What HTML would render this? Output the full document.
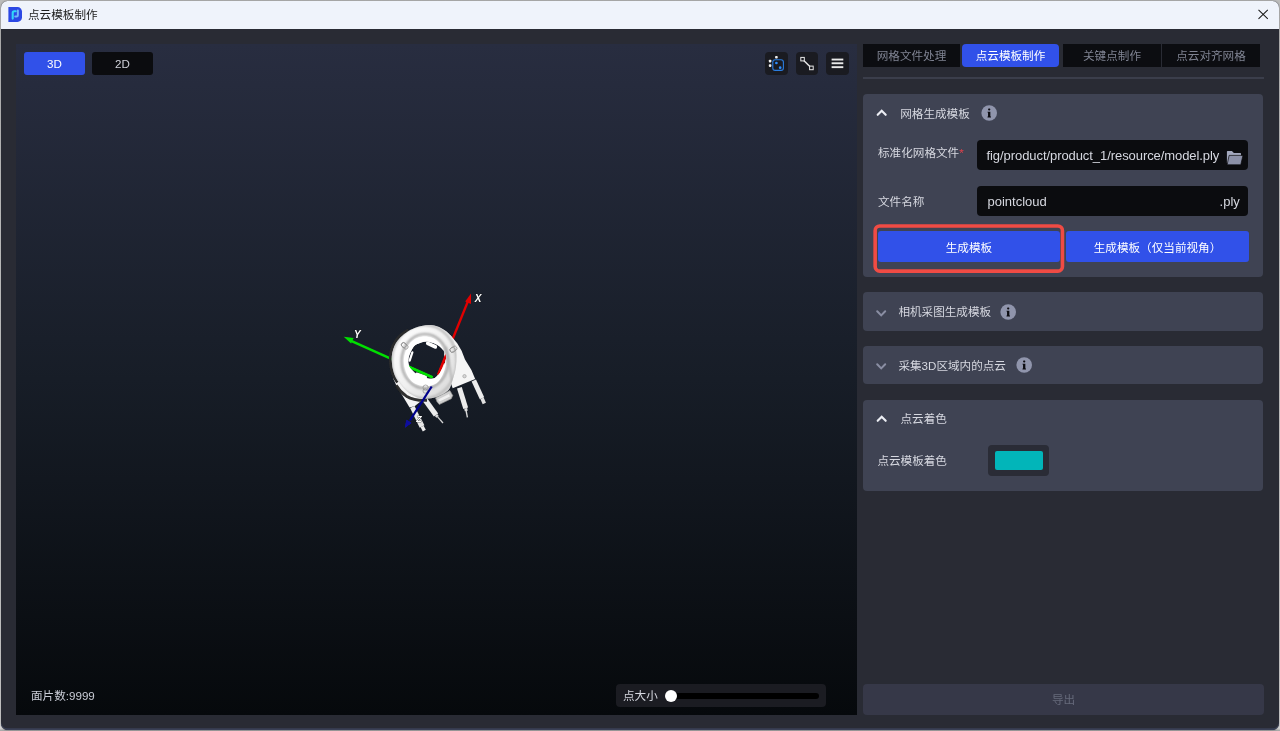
<!DOCTYPE html>
<html lang="zh-CN">
<head>
<meta charset="utf-8">
<title>点云模板制作</title>
<style>
*{box-sizing:border-box;margin:0;padding:0}
html,body{width:1280px;height:731px;overflow:hidden}
body{background:linear-gradient(180deg,#bcbcbc 0,#cfcfcf 30%,#d8d8d8 99.6%,#a0a0a0 100%);font-family:"Liberation Sans","Noto Sans CJK SC",sans-serif;font-size:11.6px;color:#d6d8e0;position:relative}
.abs{position:absolute}
#win{position:absolute;left:1px;top:1px;width:1277.8px;height:728.8px;border-radius:6.5px 6.5px 6.5px 6.5px;background:#292b34;overflow:hidden;box-shadow:0 0 2px rgba(0,0,0,.45),inset 0 -1.7px 0 #3a4056;will-change:transform}
#titlebar{position:absolute;left:0;top:0;width:100%;height:28.2px;background:#eff3fb}
#title{position:absolute;left:27px;top:0;height:28px;line-height:28px;font-size:11.6px;color:#1b1b1b}
#viewport{position:absolute;left:15px;top:43.4px;width:840.5px;height:670.4px;background:linear-gradient(180deg,#282d40 0%,#171d27 50%,#06090c 100%)}
.vbtn{position:absolute;top:51px;height:23px;width:61px;border-radius:3px;text-align:center;line-height:23px;font-size:11.6px;color:#e6e8f0}
.ibtn{position:absolute;top:51px;width:23px;height:23px;border-radius:4px;background:#1a1b21}
.tab{position:absolute;top:43px;height:23px;width:97px;background:#0c0d11;color:#7f8392;text-align:center;line-height:24px;font-size:11.6px}
.tab.on{background:#3151e9;color:#fff;border-radius:4px}
.panel{position:absolute;left:862px;width:400px;background:#3f4353;border-radius:4px}
.ptitle{position:absolute;font-size:11.6px;color:#d6d8e0;line-height:16px;white-space:nowrap}
.lbl{position:absolute;font-size:11.6px;color:#d6d8e0;line-height:16px;white-space:nowrap}
.inp{position:absolute;background:#0b0c0f;border-radius:4px;height:30px;color:#d6d8e0;font-size:13px;line-height:32px;white-space:nowrap;overflow:hidden}
.bbtn{position:absolute;background:#3151e9;border-radius:3px;height:30px;color:#fff;text-align:center;line-height:33px;font-size:11.6px;overflow:hidden}
</style>
</head>
<body>
<div id="win">
  <div id="titlebar">
    <svg class="abs" style="left:7px;top:6px" width="15" height="16" viewBox="0 0 15 16">
      <path d="M0.4 0.1H9.5A4.5 4.5 0 0 1 14 4.6V10.4A4.5 4.5 0 0 1 9.5 14.9H0.4Z" fill="#2c48e4"/>
      <path d="M4.7 11.6V5.7Q4.7 4.2 6.2 4.2H7.7" fill="none" stroke="#30d8f8" stroke-width="2.1" stroke-linecap="round"/>
      <path d="M9.85 3.4V8.2Q9.85 9.45 8.6 9.45H7.2" fill="none" stroke="#72b8f8" stroke-width="2" stroke-linecap="round"/>
    </svg>
    <div id="title">点云模板制作</div>
    <svg class="abs" style="left:1256px;top:8px" width="13" height="13" viewBox="0 0 13 13"><path d="M1.5 0.8L10.8 9.9M10.8 0.8L1.5 9.9" stroke="#1a1a1a" stroke-width="1.05" fill="none"/></svg>
  </div>

  <div id="viewport"></div>
  <div class="vbtn" style="left:23px;background:#3151e9;color:#fff">3D</div>
  <div class="vbtn" style="left:91px;background:#0b0c0f;color:#d0d2da">2D</div>

  <div class="ibtn" style="left:764px"></div>
  <div class="ibtn" style="left:794.7px;width:22.6px"></div>
  <div class="ibtn" style="left:825px"></div>
  <svg class="abs" style="left:-1px;top:-1px" width="1280" height="731" viewBox="0 0 1280 731">
    <!-- icon 1 -->
    <rect x="775.1" y="55.9" width="2.6" height="2.6" rx="0.8" fill="#f0f0f0"/>
    <rect x="768.8" y="59.8" width="2.6" height="2.6" rx="0.8" fill="#f0f0f0"/>
    <rect x="768.8" y="64.3" width="2.6" height="2.6" rx="0.8" fill="#f0f0f0"/>
    <rect x="772.8" y="59.7" width="10.6" height="10.7" rx="2.4" fill="none" stroke="#2a7de0" stroke-width="1.1"/>
    <circle cx="776.4" cy="63" r="1.35" fill="#2a8cff"/>
    <circle cx="780.2" cy="67.7" r="1.35" fill="#2a8cff"/>
    <!-- icon 2 -->
    <path d="M802.5 59.2L811.4 67.9" stroke="#e8e8e8" stroke-width="1.4" fill="none"/>
    <rect x="800.8" y="57.4" width="3.5" height="3.5" fill="#1a1b21" stroke="#e8e8e8" stroke-width="1"/>
    <rect x="809.6" y="66.1" width="3.6" height="3.6" fill="#1a1b21" stroke="#e8e8e8" stroke-width="1"/>
    <!-- icon 3 -->
    <rect x="831.6" y="58.6" width="11.7" height="1.9" fill="#e8e8e8"/>
    <rect x="831.6" y="62.3" width="11.7" height="1.9" fill="#e8e8e8"/>
    <rect x="831.6" y="66.2" width="11.7" height="1.9" fill="#e8e8e8"/>
  </svg>
  <svg id="model" class="abs" style="left:-1px;top:-1px" width="1280" height="731" viewBox="0 0 1280 731">
    <defs>
      <linearGradient id="gRing" x1="0" y1="0" x2="1" y2="1">
        <stop offset="0" stop-color="#ffffff"/><stop offset="0.5" stop-color="#f1f1f1"/><stop offset="1" stop-color="#d6d6d6"/>
      </linearGradient>
      <filter id="b1" x="-30%" y="-30%" width="160%" height="160%"><feGaussianBlur stdDeviation="0.8"/></filter>
      <filter id="b3" x="-30%" y="-30%" width="160%" height="160%"><feGaussianBlur stdDeviation="0.55"/></filter>
      <filter id="b2" x="-20%" y="-20%" width="140%" height="140%"><feGaussianBlur stdDeviation="0.35"/></filter>
      <clipPath id="cpRing"><path d="M428.8 325.1C431.0 325.2 433.8 325.4 436.0 326.0C438.2 326.6 440.1 327.5 441.9 328.4C443.7 329.3 445.1 330.3 446.6 331.5C448.1 332.7 449.6 334.1 450.7 335.5C451.8 336.9 452.8 338.4 453.5 340.0C454.2 341.6 454.5 343.1 455.0 345.0C455.5 346.9 456.1 349.3 456.3 351.5C456.6 353.7 456.5 355.8 456.5 358.0C456.5 360.2 456.4 362.7 456.1 365.0C455.9 367.3 455.7 369.2 455.0 372.0C454.3 374.8 452.9 379.1 452.0 382.0C451.1 384.9 450.4 387.3 449.3 389.1C448.2 390.9 446.9 391.6 445.4 392.6C443.9 393.6 442.2 394.5 440.4 395.3C438.6 396.1 436.6 396.9 434.5 397.4C432.4 397.9 430.2 398.3 428.0 398.4C425.8 398.5 423.2 398.5 421.0 398.2C418.8 397.9 417.4 397.6 415.0 396.5C412.6 395.4 409.5 393.6 406.9 391.3C404.3 389.0 401.1 385.0 399.2 382.6C397.3 380.2 396.4 378.8 395.4 376.8C394.4 374.8 393.8 372.7 393.2 370.5C392.6 368.3 392.2 365.9 392.0 363.5C391.8 361.1 391.6 358.6 391.8 356.3C392.0 354.0 392.5 351.7 393.2 349.5C393.9 347.3 394.7 345.2 395.9 343.2C397.1 341.1 398.8 339.0 400.6 337.2C402.4 335.4 405.0 333.5 406.9 332.2C408.8 330.9 410.2 330.1 412.0 329.3C413.8 328.5 415.7 327.7 417.5 327.1C419.3 326.5 421.1 326.0 423.0 325.7C424.9 325.4 426.6 325.1 428.8 325.1Z"/></clipPath>
      <clipPath id="cpHole"><path d="M416.7 344.3C419.3 342.9 423.9 341.1 427.7 341.5C431.5 341.9 436.7 344.2 439.7 346.5C442.7 348.8 444.9 352.3 445.7 355.2C446.5 358.1 446.0 360.6 444.6 364.0C443.2 367.4 439.8 373.1 437.5 375.5C435.2 377.9 434.3 378.8 431.0 378.7C427.7 378.6 421.4 376.9 417.8 374.9C414.2 372.9 411.2 369.4 409.6 366.7C408.1 364.0 408.1 361.3 408.5 358.5C408.9 355.7 410.4 352.1 411.8 349.7C413.2 347.3 414.1 345.7 416.7 344.3Z"/></clipPath>
    </defs>
    <g filter="url(#b2)">
    <!-- Y axis -->
    <path d="M432.6 377.4L350 340.3" stroke="#00e000" stroke-width="2.4" fill="none"/>
    <path d="M343.7 336.7L353.6 337.9L351.1 343.6Z" fill="#00e000"/>
    <!-- X axis -->
    <path d="M438.2 374.7L468.3 300.4" stroke="#e00000" stroke-width="2.4" fill="none"/>
    <path d="M471 293.6L471 304L465.2 301.6Z" fill="#e00000"/>
    <!-- pins -->
    <path d="M412.3 407L418.7 419.8" stroke="#ececec" stroke-width="4.9" fill="none"/>
    <path d="M418.7 419.8L422.1 426.5" stroke="#e6e6e6" stroke-width="5.2" fill="none"/>
    <path d="M422.1 426.5L424.3 430.6" stroke="#ededed" stroke-width="3.4" fill="none"/>
    <path d="M425 399.7L436 415" stroke="#ececec" stroke-width="5.3" fill="none"/>
    <path d="M436 415L437.6 416.9" stroke="#dcdcdc" stroke-width="3" fill="none"/>
    <path d="M437.6 416.9L443 423" stroke="#d4d4d4" stroke-width="1.3" fill="none"/>
    <path d="M459.4 387.7L465.7 408.3" stroke="#ececec" stroke-width="5" fill="none"/>
    <path d="M465.7 408.3L466.2 411" stroke="#e0e0e0" stroke-width="3" fill="none"/>
    <path d="M466 410.2L467.4 417.4" stroke="#dcdcdc" stroke-width="1.4" fill="none"/>
    <path d="M473.8 380.5L482 398.3" stroke="#ececec" stroke-width="4.8" fill="none"/>
    <path d="M482 398.3L484.3 403.5" stroke="#e0e0e0" stroke-width="3.6" fill="none"/>
    <!-- housing left-bottom -->
    <path d="M393 378L396.4 385.6L409.6 407.6L414.9 405.9L423.6 399L424 394L410 386Z" fill="#f4f4f4"/>
    <!-- clip -->
    <path d="M435.5 397.8L449.9 390.6L452.7 395.4L451.3 398.7L439.3 404.5L436.9 401.6Z" fill="#cfcfcf" stroke="#8f8f8f" stroke-width="0.7"/>
    <path d="M438 399.4L449 394L450 396.4L439.6 401.6Z" fill="#f0f0f0"/>
    <!-- bracket -->
    <path d="M447 336L450.7 335.5L457.2 343.2L461.6 350.8L465 359.6L471.4 370L475.2 379.1L452.7 388.2L448 375L444 355Z" fill="#f5f5f5"/>
    <circle cx="464.5" cy="376.2" r="1.7" fill="#d6d6d6" stroke="#9a9a9a" stroke-width="0.6"/>
    </g>
    <!-- ring shadow -->
    <path d="M408.5 329.8C407.1 330.8 402.7 333.5 400.4 335.6C398.1 337.7 396.3 340.1 394.9 342.4C393.4 344.7 392.4 347.2 391.7 349.5C390.9 351.8 390.6 353.9 390.4 356.3C390.2 358.7 390.4 361.6 390.7 364.0C390.9 366.4 391.3 368.8 391.9 371.0C392.5 373.2 393.4 375.6 394.3 377.5C395.2 379.4 396.9 381.6 397.4 382.4" fill="none" stroke="#2c2c2c" stroke-width="2.8" filter="url(#b3)"/>
    <path d="M396.2 385.2C399 390 402.5 393.6 406.4 396.2C411 399 418 400.8 427 400.4" fill="none" stroke="#262626" stroke-width="2.8" filter="url(#b3)" opacity="0.95"/>
    <!-- ring -->
    <g filter="url(#b2)">
    <path fill-rule="evenodd" d="M428.8 325.1C431.0 325.2 433.8 325.4 436.0 326.0C438.2 326.6 440.1 327.5 441.9 328.4C443.7 329.3 445.1 330.3 446.6 331.5C448.1 332.7 449.6 334.1 450.7 335.5C451.8 336.9 452.8 338.4 453.5 340.0C454.2 341.6 454.5 343.1 455.0 345.0C455.5 346.9 456.1 349.3 456.3 351.5C456.6 353.7 456.5 355.8 456.5 358.0C456.5 360.2 456.4 362.7 456.1 365.0C455.9 367.3 455.7 369.2 455.0 372.0C454.3 374.8 452.9 379.1 452.0 382.0C451.1 384.9 450.4 387.3 449.3 389.1C448.2 390.9 446.9 391.6 445.4 392.6C443.9 393.6 442.2 394.5 440.4 395.3C438.6 396.1 436.6 396.9 434.5 397.4C432.4 397.9 430.2 398.3 428.0 398.4C425.8 398.5 423.2 398.5 421.0 398.2C418.8 397.9 417.4 397.6 415.0 396.5C412.6 395.4 409.5 393.6 406.9 391.3C404.3 389.0 401.1 385.0 399.2 382.6C397.3 380.2 396.4 378.8 395.4 376.8C394.4 374.8 393.8 372.7 393.2 370.5C392.6 368.3 392.2 365.9 392.0 363.5C391.8 361.1 391.6 358.6 391.8 356.3C392.0 354.0 392.5 351.7 393.2 349.5C393.9 347.3 394.7 345.2 395.9 343.2C397.1 341.1 398.8 339.0 400.6 337.2C402.4 335.4 405.0 333.5 406.9 332.2C408.8 330.9 410.2 330.1 412.0 329.3C413.8 328.5 415.7 327.7 417.5 327.1C419.3 326.5 421.1 326.0 423.0 325.7C424.9 325.4 426.6 325.1 428.8 325.1ZM416.7 344.3C419.3 342.9 423.9 341.1 427.7 341.5C431.5 341.9 436.7 344.2 439.7 346.5C442.7 348.8 444.9 352.3 445.7 355.2C446.5 358.1 446.0 360.6 444.6 364.0C443.2 367.4 439.8 373.1 437.5 375.5C435.2 377.9 434.3 378.8 431.0 378.7C427.7 378.6 421.4 376.9 417.8 374.9C414.2 372.9 411.2 369.4 409.6 366.7C408.1 364.0 408.1 361.3 408.5 358.5C408.9 355.7 410.4 352.1 411.8 349.7C413.2 347.3 414.1 345.7 416.7 344.3Z" fill="url(#gRing)"/>
    </g>
    <g clip-path="url(#cpRing)">
      <ellipse cx="424.2" cy="361.6" rx="32.6" ry="36.8" fill="none" stroke="#bcbcbc" stroke-width="2.4" filter="url(#b1)"/>
      <ellipse cx="424.9" cy="361.2" rx="23.3" ry="27.2" fill="none" stroke="#a6a6a6" stroke-width="2.2" filter="url(#b1)"/>
      <path d="M445.6 347L449.6 367.2L453.4 388" fill="none" stroke="#b0b0b0" stroke-width="1.8" filter="url(#b1)"/>
      <path fill-rule="evenodd" d="M424.9 336.4C429.6 336.4 435.5 338.4 439.0 342.5C442.5 346.6 446.1 354.8 446.1 361.2C446.1 367.6 442.5 376.8 439.0 381.0C435.5 385.2 429.6 386.4 424.9 386.2C420.1 386.0 414.0 384.2 410.5 380.0C407.0 375.8 403.8 367.4 403.8 361.2C403.8 354.9 407.0 346.6 410.5 342.5C414.0 338.4 420.1 336.4 424.9 336.4ZM416.7 344.3C419.3 342.9 423.9 341.1 427.7 341.5C431.5 341.9 436.7 344.2 439.7 346.5C442.7 348.8 444.9 352.3 445.7 355.2C446.5 358.1 446.0 360.6 444.6 364.0C443.2 367.4 439.8 373.1 437.5 375.5C435.2 377.9 434.3 378.8 431.0 378.7C427.7 378.6 421.4 376.9 417.8 374.9C414.2 372.9 411.2 369.4 409.6 366.7C408.1 364.0 408.1 361.3 408.5 358.5C408.9 355.7 410.4 352.1 411.8 349.7C413.2 347.3 414.1 345.7 416.7 344.3Z" fill="#ffffff" filter="url(#b2)"/>
    </g>
    <!-- notches -->
    <g fill="#ffffff" filter="url(#b2)">
      <rect x="-6" y="-1.9" width="12" height="3.8" rx="1.9" transform="translate(431.5 345.1) rotate(25)"/>
      <rect x="-6.2" y="-2" width="12.4" height="4" rx="2" transform="translate(421.1 376) rotate(20)"/>
      <rect x="-5.5" y="-1.1" width="11" height="2.2" rx="1.1" transform="translate(411 356.5) rotate(-72)"/>
      <rect x="-5" y="-1.3" width="10" height="2.6" rx="1.3" transform="translate(442 367.5) rotate(-68)"/>
    </g>
    <g clip-path="url(#cpHole)" filter="url(#b2)">
      <path d="M432.6 377.4L350 340.3" stroke="#00e000" stroke-width="2.4" fill="none"/>
      <path d="M438.2 374.7L468.3 300.4" stroke="#e00000" stroke-width="2.4" fill="none"/>
    </g>
    <!-- small ovals -->
    <g fill="none" stroke="#8c8c8c" stroke-width="0.7">
      <rect x="-3.8" y="-2.2" width="7.6" height="4.4" rx="2.2" transform="translate(404.7 345.9) rotate(42)"/>
      <rect x="-2.6" y="-2.2" width="5.2" height="4.4" rx="2.2" transform="translate(403.8 345.1) rotate(42)"/>
      <rect x="-3.8" y="-2.3" width="7.6" height="4.6" rx="2.3" transform="translate(453.4 349.2) rotate(-32)"/>
      <rect x="-2.6" y="-2.3" width="5.2" height="4.6" rx="2.3" transform="translate(452.6 349.8) rotate(-32)"/>
      <circle cx="425.6" cy="387.6" r="2.6"/>
      <circle cx="425.2" cy="391" r="2.2"/>
    </g>
    <!-- Z axis -->
    <g filter="url(#b2)">
    <path d="M431.7 386.5L410 420.4" stroke="#06068c" stroke-width="2.2" fill="none"/>
    <path d="M405.3 427.2L406.7 420.2L411.1 423Z" fill="#1010a0" stroke="#1010a0" stroke-width="1" stroke-linejoin="round"/>
    </g>
    <g font-family="'Liberation Sans',sans-serif" font-size="10" font-weight="bold" font-style="italic" fill="#ffffff" stroke="#111" stroke-width="0.5" paint-order="stroke">
      <text x="474.8" y="302.2">X</text>
      <text x="353.9" y="338">Y</text>
      <text x="416.2" y="422" font-size="9">Z</text>
    </g>
  </svg>

  <div class="lbl" style="left:30px;top:687px;color:#c9ccd6">面片数:9999</div>

  <div class="abs" style="left:615px;top:683px;width:210px;height:23px;background:#1b1c22;border-radius:4px"></div>
  <div class="lbl" style="left:622px;top:686.5px;color:#d6d8e0">点大小</div>
  <div class="abs" style="left:667px;top:691.5px;width:151px;height:6px;border-radius:3px;background:#000"></div>
  <div class="abs" style="left:664px;top:688.5px;width:12px;height:12px;border-radius:6px;background:#fff"></div>

  <!-- tabs -->
  <div class="tab" style="left:862px">网格文件处理</div>
  <div class="tab on" style="left:961px">点云模板制作</div>
  <div class="tab" style="left:1062px;width:98px">关键点制作</div>
  <div class="tab" style="left:1161.2px;width:97.6px">点云对齐网格</div>
  <div class="abs" style="left:862px;top:75.5px;width:400.5px;height:2px;background:#3b3e4b"></div>

  <!-- panel 1 -->
  <div class="panel" style="top:93px;height:183px"></div>
  <svg class="abs" style="left:874px;top:106.3px" width="14" height="10" viewBox="0 0 14 10"><path d="M2.7 7.8L6.7 3.7L10.7 7.8" fill="none" stroke="#eceef4" stroke-width="2.1" stroke-linecap="round" stroke-linejoin="miter"/></svg>
  <div class="ptitle" style="left:899.2px;top:104.5px">网格生成模板</div>
  <svg class="abs info" style="left:979.5px;top:104px" width="17" height="17" viewBox="0 0 17 17"><circle cx="8.2" cy="8" r="7.8" fill="#9095ac"/><rect x="7.05" y="3.6" width="2.3" height="1.8" rx="0.8" fill="#0c0c10"/><path d="M6.5 6.7H9.35V11.6H10V12.6H6.5V11.6H7.05V7.6H6.5Z" fill="#0c0c10"/></svg>

  <div class="lbl" style="left:877px;top:144.1px">标准化网格文件<span style="color:#e0404a">*</span></div>
  <div class="inp" style="left:976px;top:139px;width:271px;padding-left:9.5px;letter-spacing:-0.07px">fig/product/product_1/resource/model.ply</div>
  <svg class="abs" style="left:1225px;top:149px" width="18" height="16" viewBox="0 0 18 16"><path d="M0.9 1.6Q0.9 0.9 1.6 0.9H5.9L7.9 2.9H14.3Q15 2.9 15 3.6V13H0.9Z" fill="#a3a8bd"/><path d="M3.1 5.4H16.2Q17 5.4 16.8 6.1L14.9 14.2Q14.8 14.8 14.1 14.8H1.1Z" fill="#8c91a8" stroke="#0b0c0f" stroke-width="0.7"/><path d="M1.1 14.8L3.1 5.8" stroke="#0b0c0f" stroke-width="0" fill="none"/></svg>

  <div class="lbl" style="left:877px;top:192.5px">文件名称</div>
  <div class="inp" style="left:976px;top:185px;width:271px;padding-left:10.5px">pointcloud<span style="position:absolute;right:8.2px;top:0">.ply</span></div>

  <svg class="abs" style="left:870px;top:221px" width="197" height="54" viewBox="0 0 197 54"><rect x="4.15" y="4.05" width="187.3" height="45.1" rx="4.6" fill="none" stroke="#f04b44" stroke-width="3.6"/></svg>
  <div class="bbtn" style="left:877px;top:230.1px;height:30.9px;width:181.8px">生成模板</div>
  <div class="bbtn" style="left:1065px;top:230.1px;height:30.9px;width:183px">生成模板（仅当前视角）</div>

  <!-- panel 2 -->
  <div class="panel" style="top:291px;height:39px"></div>
  <svg class="abs" style="left:874px;top:306px" width="14" height="12" viewBox="0 0 14 12"><path d="M2.2 4.3L6.2 8.4L10.2 4.3" fill="none" stroke="#8a8ea3" stroke-width="2" stroke-linecap="round"/></svg>
  <div class="ptitle" style="left:897.4px;top:303px">相机采图生成模板</div>
  <svg class="abs info" style="left:998.5px;top:302.5px" width="17" height="17" viewBox="0 0 17 17"><circle cx="8.2" cy="8" r="7.8" fill="#9095ac"/><rect x="7.05" y="3.6" width="2.3" height="1.8" rx="0.8" fill="#0c0c10"/><path d="M6.5 6.7H9.35V11.6H10V12.6H6.5V11.6H7.05V7.6H6.5Z" fill="#0c0c10"/></svg>

  <!-- panel 3 -->
  <div class="panel" style="top:345px;height:38px"></div>
  <svg class="abs" style="left:874px;top:360px" width="14" height="12" viewBox="0 0 14 12"><path d="M2.2 3.3L6.2 7.4L10.2 3.3" fill="none" stroke="#8a8ea3" stroke-width="2" stroke-linecap="round"/></svg>
  <div class="ptitle" style="left:897.4px;top:356.5px">采集3D区域内的点云</div>
  <svg class="abs info" style="left:1014.5px;top:356px" width="17" height="17" viewBox="0 0 17 17"><circle cx="8.2" cy="8" r="7.8" fill="#9095ac"/><rect x="7.05" y="3.6" width="2.3" height="1.8" rx="0.8" fill="#0c0c10"/><path d="M6.5 6.7H9.35V11.6H10V12.6H6.5V11.6H7.05V7.6H6.5Z" fill="#0c0c10"/></svg>

  <!-- panel 4 -->
  <div class="panel" style="top:399px;height:91px"></div>
  <svg class="abs" style="left:874px;top:412.2px" width="14" height="10" viewBox="0 0 14 10"><path d="M2.7 7.8L6.7 3.7L10.7 7.8" fill="none" stroke="#eceef4" stroke-width="2.1" stroke-linecap="round"/></svg>
  <div class="ptitle" style="left:899.5px;top:410px">点云着色</div>
  <div class="lbl" style="left:876.4px;top:452px">点云模板着色</div>
  <div class="abs" style="left:987px;top:444px;width:61px;height:31px;border-radius:4px;background:#2a2c36"></div>
  <div class="abs" style="left:994px;top:450.2px;width:48px;height:19px;border-radius:2px;background:#02b5b9"></div>

  <div class="abs" style="left:862px;top:683px;width:401px;height:31px;border-radius:4px;background:#363848;color:#666a7b;text-align:center;line-height:31px;font-size:11.6px">导出</div>
</div>
</body>
</html>
